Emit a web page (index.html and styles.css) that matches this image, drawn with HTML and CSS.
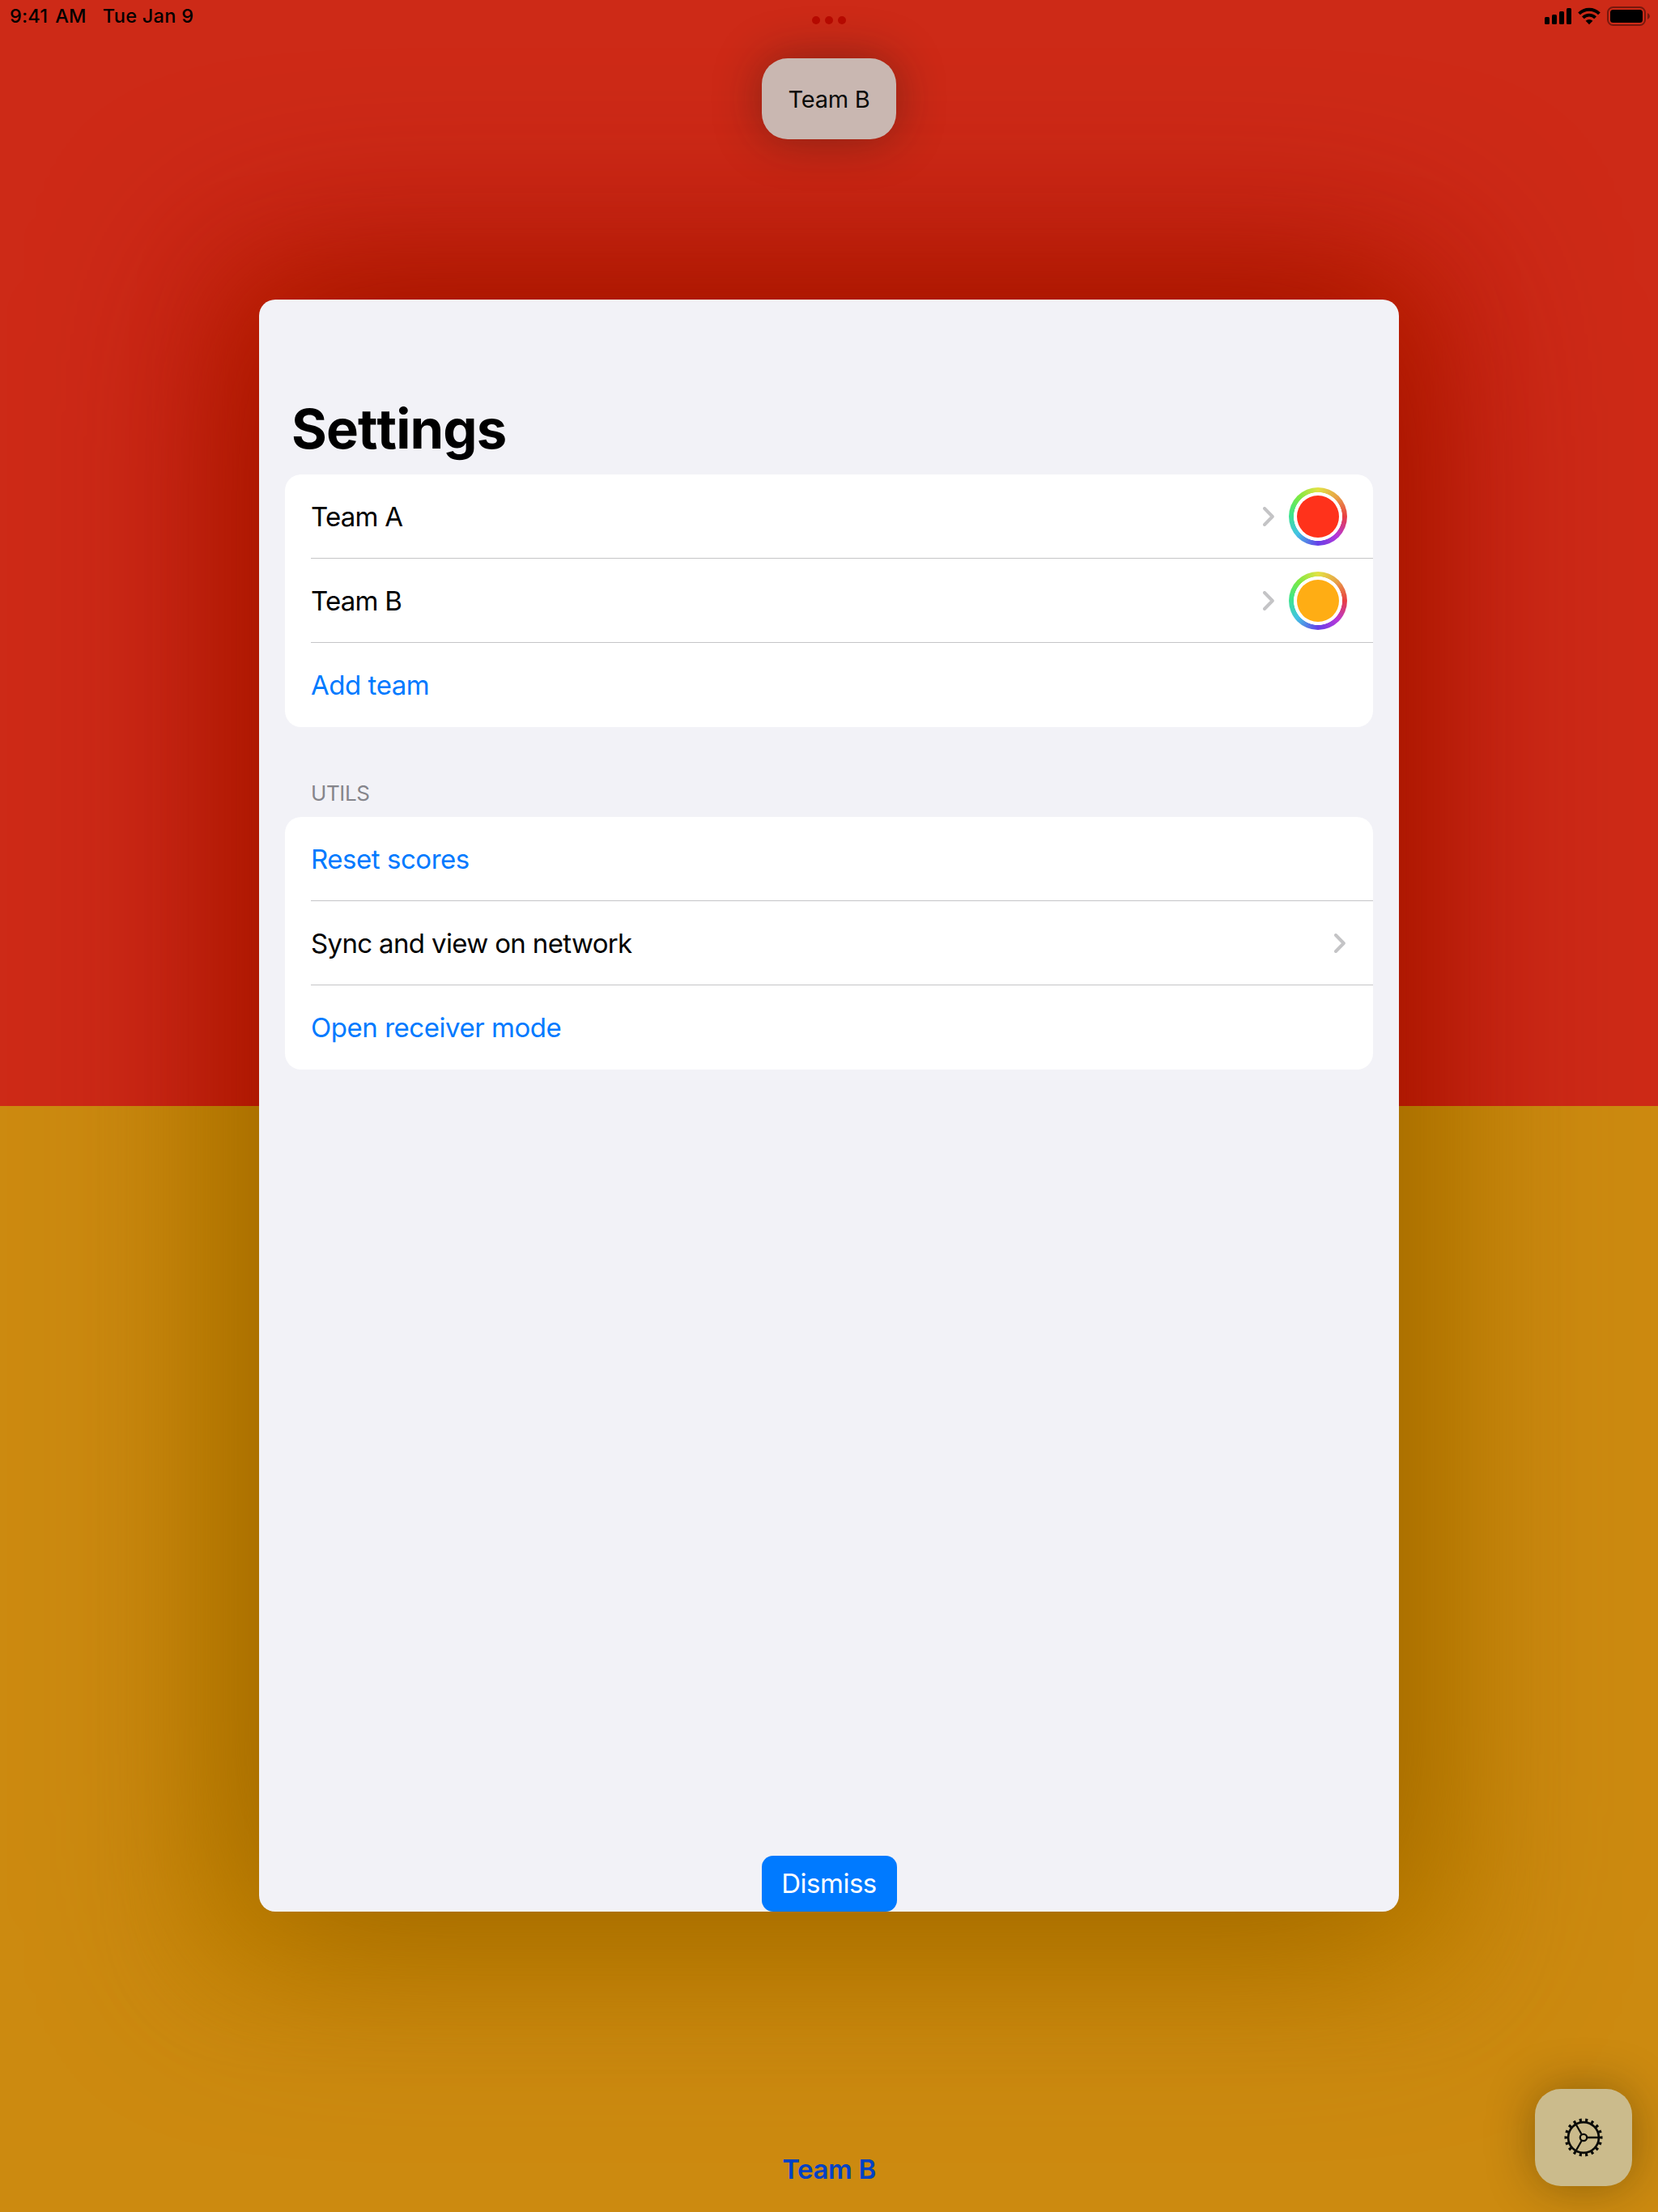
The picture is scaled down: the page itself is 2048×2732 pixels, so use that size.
FILE: index.html
```html
<!DOCTYPE html>
<html lang="en">
<head>
<meta charset="utf-8">
<title>Settings</title>
<link rel="stylesheet" href="styles.css">
</head>
<body>
<div class="screen">
  <div class="backdrop">
    <div class="half half-red"></div>
    <div class="half half-orange"></div>
  </div>
  <div class="content">
    <header class="status">
      <div class="status-left"><span class="time">9:41 AM</span><span class="date">Tue Jan 9</span></div>
      <svg class="dots" viewBox="0 0 42 10"><circle cx="5" cy="5" r="5"/><circle cx="21" cy="5" r="5"/><circle cx="37" cy="5" r="5"/></svg>
      <svg class="status-icons" viewBox="0 0 132 26">
        <rect x="0" y="14" width="6" height="9" rx="1.5"/><rect x="9" y="11" width="6" height="12" rx="1.5"/><rect x="18" y="7" width="6" height="16" rx="1.5"/><rect x="27" y="3" width="6" height="20" rx="1.5"/>
        <g fill="none" stroke="#000" stroke-width="3.9"><path d="M42.6 9.9a17.5 17.5 0 0 1 24.8 0"/><path d="M47.4 14.8a10.8 10.8 0 0 1 15.2 0"/></g>
        <path d="M55 23.2l-4.4-4.4a6.2 6.2 0 0 1 8.8 0z"/>
        <rect x="78" y="2" width="46" height="22" rx="6.5" fill="none" stroke="#000" stroke-opacity=".42" stroke-width="2"/>
        <rect x="81" y="5" width="40" height="16" rx="3.5"/>
        <path d="M127 9q3 1.3 3 4t-3 4z" fill-opacity=".42"/>
      </svg>
    </header>
    <div class="chip">Team B</div>
    <main class="sheet">
      <h1>Settings</h1>
      <section class="group">
        <div class="row team"><span class="label">Team A</span><svg class="chevron" viewBox="0 0 14 24"><path d="M2 2l9.8 10L2 22"/></svg><span class="well"><i class="swatch swatch-red"></i></span></div>
        <div class="row team"><span class="label">Team B</span><svg class="chevron" viewBox="0 0 14 24"><path d="M2 2l9.8 10L2 22"/></svg><span class="well"><i class="swatch swatch-orange"></i></span></div>
        <div class="row link"><span class="label">Add team</span></div>
      </section>
      <h2>UTILS</h2>
      <section class="group">
        <div class="row link"><span class="label">Reset scores</span></div>
        <div class="row"><span class="label">Sync and view on network</span><svg class="chevron chevron-end" viewBox="0 0 14 24"><path d="M2 2l9.8 10L2 22"/></svg></div>
        <div class="row link"><span class="label">Open receiver mode</span></div>
      </section>
      <button class="dismiss">Dismiss</button>
    </main>
    <footer class="footer">
      <div class="footer-team">Team B</div>
      <button class="gear" aria-label="Settings">
        <svg viewBox="-24 -24 48 48">
          <g fill="none" stroke="#0b0c09">
            <circle r="18.9" stroke-width="2.7"/>
            <circle r="21.2" stroke-width="4.6" stroke-dasharray="3.1 4.3" pathLength="133.2" stroke-dashoffset="1.55"/>
            <circle r="4.2" stroke-width="2.3"/>
            <path stroke-width="2.3" d="M5 0H19M-2.5-4.3L-9.5-16.5M-2.5 4.3L-9.5 16.5"/>
          </g>
        </svg>
      </button>
    </footer>
  </div>
</div>
</body>
</html>
```
FILE: styles.css
```css
* { box-sizing: border-box; }
body { margin: 0; font-family: Inter, "Liberation Sans", sans-serif; color: #000; }
button { border: 0; padding: 0; font: inherit; }
.screen { position: relative; width: 2048px; height: 2732px; overflow: hidden; }
.backdrop { position: absolute; inset: 0; }
.half { position: relative; height: 1366px; overflow: hidden; }
.half-red { background: #cd2a17; }
.half-orange { background: #cc8a10; }
/* The sheet's shadow is tinted by the colour it falls on. */
.half::before { content: ""; position: absolute; left: 320px; width: 1408px; height: 1991px; border-radius: 20px; }
.half-red::before { top: 370px; background: #b01a00; box-shadow: 0 0 230px 36px rgb(158, 15, 0), 0 0 110px 30px rgb(202, 40, 0); }
.half-orange::before { top: -996px; background: #ad7200; box-shadow: 0 0 230px 36px rgb(155, 100, 0), 0 0 120px 80px rgb(202, 136, 0); }
.content { position: relative; height: 100%; display: flex; flex-direction: column; align-items: center; }

.status { width: 100%; height: 72px; display: grid; grid-template-columns: 1fr 42px 1fr; align-items: start; flex: none; }
.status-left { display: flex; gap: 20px; padding: 5px 0 0 12px; font-size: 23.5px; line-height: 29px; font-weight: 500; white-space: nowrap; }
.time { letter-spacing: .2px; word-spacing: 2.5px; }
.date { letter-spacing: .3px; }
.dots { width: 42px; height: 10px; margin-top: 20px; fill: #b90a00; }
.status-icons { width: 132px; height: 26px; justify-self: end; margin: 7px 8px 0 0; }

.chip { flex: none; width: 166px; height: 100px; border-radius: 32px; background: #c9b7b1; box-shadow: 0 0 58px rgba(25, 25, 20, .4); display: flex; align-items: center; justify-content: center; font-size: 29px; letter-spacing: -.25px; color: #0b0c0a; }

.sheet { flex: none; width: 1408px; height: 1991px; margin-top: 198px; padding: 0 32px; border-radius: 20px; background: #f2f2f7; display: flex; flex-direction: column; }
h1 { margin: 118px 0 0 8px; height: 98px; font-size: 67px; line-height: 84px; font-weight: 700; letter-spacing: -.9px; font-kerning: none; font-variant-ligatures: none; }
.group { flex: none; border-radius: 20px; background: #fff; overflow: hidden; }
.row { height: 104px; margin-left: 32px; padding-right: 32px; display: flex; align-items: center; border-bottom: 1px solid #c5c5c7; }
.row:last-child { border-bottom: 0; }
.label { flex: 1; font-size: 33px; line-height: 40px; letter-spacing: -.65px; }
.team .label { letter-spacing: -.75px; }
.link { color: #007aff; }
.link .label { letter-spacing: -.46px; }
.chevron { width: 14px; height: 24px; margin-right: 18px; fill: none; stroke: #c4c4c6; stroke-width: 4; stroke-linecap: round; stroke-linejoin: round; }
.chevron-end { margin-right: 2px; }
.well { width: 72px; height: 72px; border-radius: 50%; display: grid; place-items: center; background: radial-gradient(circle, #fff 29.7px, transparent 30.3px), conic-gradient(#e2e244, #e8a047 45deg, #e93d42 90deg, #b737d8 135deg, #6540e8 180deg, #42c2e4 230deg, #3de68a 275deg, #7de943 315deg, #e2e244); }
.swatch { width: 52px; height: 52px; border-radius: 50%; }
.swatch-red { background: #ff321b; }
.swatch-orange { background: #ffad14; }
h2 { margin: 65px 0 0 32px; height: 46px; font-size: 26px; line-height: 34px; font-weight: 400; letter-spacing: -.4px; color: #85858b; }
.dismiss { width: 167px; height: 69px; margin: auto auto 0; padding-bottom: 2px; border-radius: 14px; background: #007aff; color: #fff; font-size: 33px; letter-spacing: -.5px; }

.footer { width: 100%; flex: 1; display: grid; grid-template-columns: 1fr auto 1fr; align-items: end; padding: 0 32px; }
.footer-team { grid-column: 2; font-size: 33px; line-height: 40px; font-weight: 600; letter-spacing: -.35px; color: #0042c6; margin-bottom: 33px; }
.gear { justify-self: end; width: 120px; height: 120px; margin-bottom: 32px; border-radius: 32px; background: #cbbb8c; box-shadow: 0 0 58px rgba(25, 25, 0, .36); display: grid; place-items: center; }
.gear svg { width: 48px; height: 48px; }
```
